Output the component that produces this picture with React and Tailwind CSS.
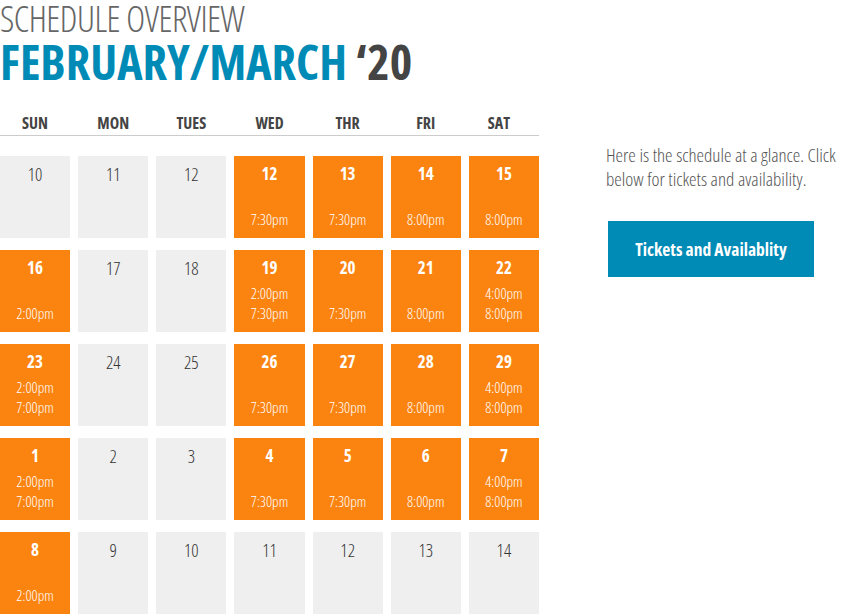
const weeks = [
  [
    { d: '10' }, { d: '11' }, { d: '12' },
    { d: '12', t: ['7:30pm'] }, { d: '13', t: ['7:30pm'] }, { d: '14', t: ['8:00pm'] }, { d: '15', t: ['8:00pm'] },
  ],
  [
    { d: '16', t: ['2:00pm'] }, { d: '17' }, { d: '18' },
    { d: '19', t: ['2:00pm', '7:30pm'] }, { d: '20', t: ['7:30pm'] }, { d: '21', t: ['8:00pm'] }, { d: '22', t: ['4:00pm', '8:00pm'] },
  ],
  [
    { d: '23', t: ['2:00pm', '7:00pm'] }, { d: '24' }, { d: '25' },
    { d: '26', t: ['7:30pm'] }, { d: '27', t: ['7:30pm'] }, { d: '28', t: ['8:00pm'] }, { d: '29', t: ['4:00pm', '8:00pm'] },
  ],
  [
    { d: '1', t: ['2:00pm', '7:00pm'] }, { d: '2' }, { d: '3' },
    { d: '4', t: ['7:30pm'] }, { d: '5', t: ['7:30pm'] }, { d: '6', t: ['8:00pm'] }, { d: '7', t: ['4:00pm', '8:00pm'] },
  ],
  [
    { d: '8', t: ['2:00pm'] }, { d: '9' }, { d: '10' }, { d: '11' }, { d: '12' }, { d: '13' }, { d: '14' },
  ],
]

const days = ['SUN', 'MON', 'TUES', 'WED', 'THR', 'FRI', 'SAT']

function Cell({ d, t }) {
  if (!t) {
    return (
      <div className="h-[82px] bg-[#efefef] pt-[6px] text-center text-[18px] leading-[24px] font-light text-[#333]">
        {d}
      </div>
    )
  }
  return (
    <div className="h-[82px] bg-[#fb8411] pt-[6px] pb-[9px] flex flex-col text-center text-white">
      <div className="text-[17px] leading-[24px] font-bold">{d}</div>
      <div className="mt-auto flex flex-col text-[15px] leading-[20px] font-light">
        {t.map((x, i) => (
          <span key={i}>{x}</span>
        ))}
      </div>
    </div>
  )
}

export default function App() {
  return (
    <div className="w-[842px] h-[614px] overflow-hidden bg-white font-['Open_Sans',sans-serif] font-stretch-condensed">
      <h2 className="text-[36px] leading-[38px] font-light text-[#666] tracking-[-0.5px]">SCHEDULE OVERVIEW</h2>
      <h1 className="text-[48px] leading-[48px] font-bold text-[#008bb7]">
        FEBRUARY/MARCH <span className="text-[#444]">‘20</span>
      </h1>

      <div className="flex mt-[25px]">
        <div className="w-[539px] shrink-0">
          <div className="grid grid-cols-7 gap-x-[8px] border-b border-[#ccc]">
            {days.map((x) => (
              <div
                key={x}
                className={`text-center text-[16px] leading-[24px] font-bold text-[#444] ${x === 'SAT' ? 'pr-[10px]' : ''}`}
              >
                {x}
              </div>
            ))}
          </div>
          <div className="mt-[20px] grid grid-cols-7 gap-x-[8px] gap-y-[12px]">
            {weeks.flat().map((c, i) => (
              <Cell key={i} {...c} />
            ))}
          </div>
        </div>

        <div className="ml-[67px] pt-[32px] shrink-0">
          <p className="w-[236px] text-[19px] leading-[24px] font-light text-[#555]">
            Here is the schedule at a glance. Click below for tickets and availability.
          </p>
          <button className="mt-[30px] ml-[2px] w-[206px] h-[56px] bg-[#008bb7] text-white text-[17.5px] font-bold">
            Tickets and Availablity
          </button>
        </div>
      </div>
    </div>
  )
}
